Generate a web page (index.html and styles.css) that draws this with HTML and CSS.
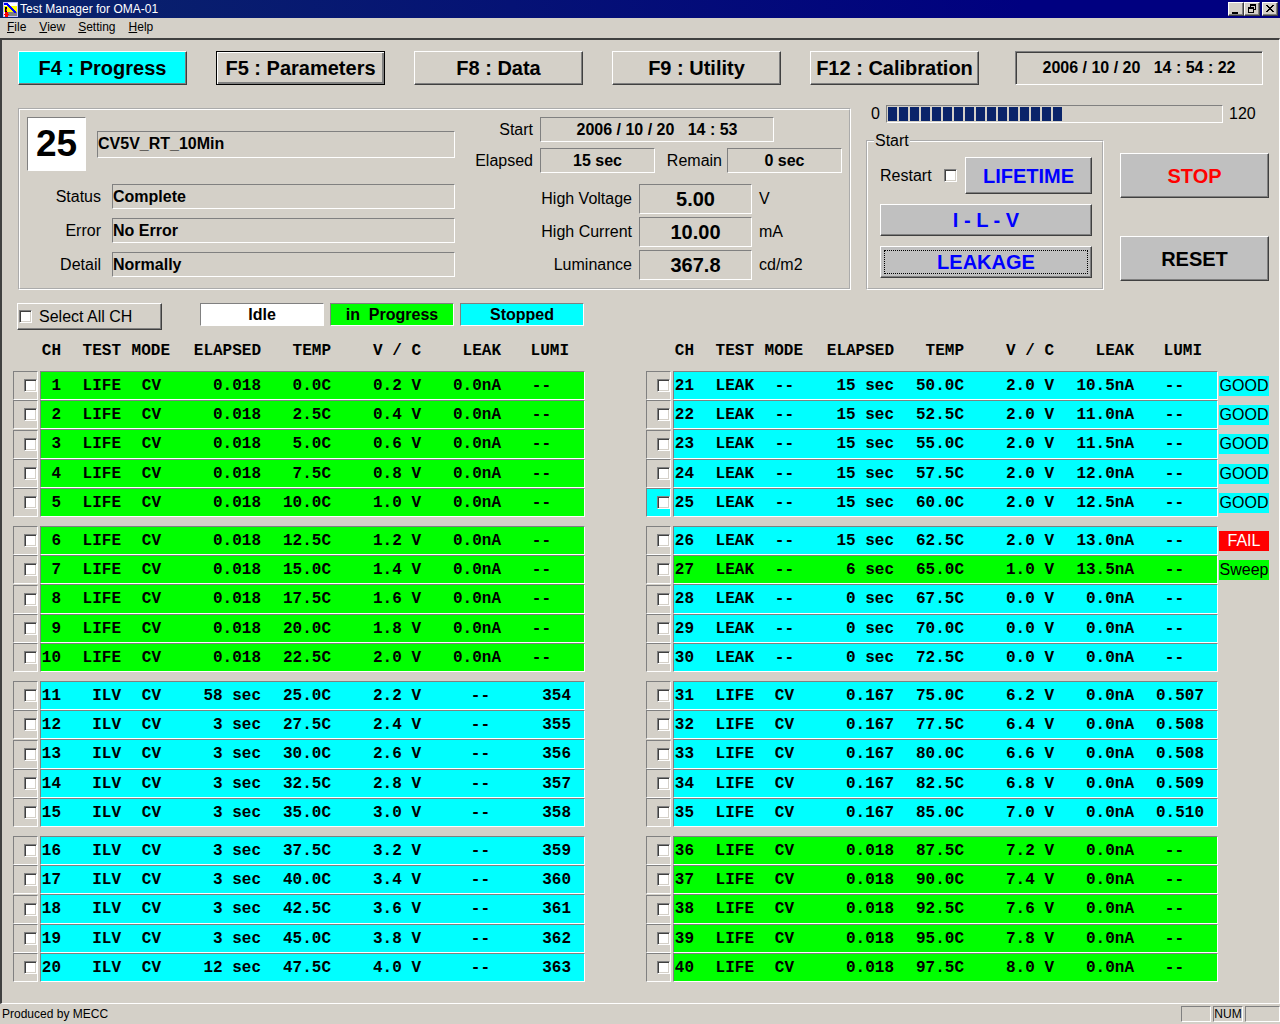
FILE: index.html
```html
<!DOCTYPE html>
<html lang="en">
<head>
<meta charset="utf-8">
<title>Test Manager for OMA-01</title>
<link rel="stylesheet" href="styles.css">
</head>
<body>
<header class="titlebar">
  <svg class="app-icon" width="16" height="16" viewBox="0 0 16 16" shape-rendering="crispEdges" aria-hidden="true">
    <path fill="#c0c0ff" d="M0 1h15v15H0z"/>
    <path fill="#fff" d="M1 2h13v3H1z"/>
    <path fill="#ff0" d="M1 5h13v6H1z"/>
    <path fill="#fff" d="M1 11h5v4H1z"/>
    <path fill="#808080" d="M5 11h9v4H5z"/>
    <path stroke="#00f" stroke-width="2" fill="none" d="M1 3h3l9 9"/>
    <path fill="#000" d="M2 6h2v5H2z"/>
    <path fill="#f00" d="M3 8h1v2H3zM2 11h3v5H2zM1 13h5v1H1z"/>
  </svg>
  <h1>Test Manager for OMA-01</h1>
  <div class="window-controls">
    <button type="button" aria-label="Minimize"><svg width="12" height="10" shape-rendering="crispEdges"><path d="M2 8h6v2H2z"/></svg></button>
    <button type="button" aria-label="Restore"><svg width="12" height="10" shape-rendering="crispEdges"><path fill-rule="evenodd" d="M4 0h6v6H8V5h1V2H5v1H4zM2 3h6v6H2zM3 5h4v3H3z"/></svg></button>
    <button type="button" aria-label="Close" class="close"><svg width="12" height="10" shape-rendering="crispEdges"><path d="M2 1h2v1h1v1h2V2h1V1h2v1H9v1H8v1H7v1h1v1h1v1h1v1H8V7H7V6H5v1H4v1H2V7h1V6h1V5h1V4H4V3H3V2H2z"/></svg></button>
  </div>
</header>
<nav class="menubar" aria-label="Menu">
  <a href="#file"><u>F</u>ile</a>
  <a href="#view"><u>V</u>iew</a>
  <a href="#setting"><u>S</u>etting</a>
  <a href="#help"><u>H</u>elp</a>
</nav>

<main>
  <div class="modes">
    <button type="button" class="mode current">F4 : Progress</button>
    <button type="button" class="mode default">F5 : Parameters</button>
    <button type="button" class="mode">F8 : Data</button>
    <button type="button" class="mode">F9 : Utility</button>
    <button type="button" class="mode">F12 : Calibration</button>
    <time class="clock">2006 / 10 / 20   14 : 54 : 22</time>
  </div>

  <div class="overview">
    <section class="channel" aria-label="Selected channel">
      <div class="identity">
        <div class="headline">
          <output class="number">25</output>
          <output class="field recipe">CV5V_RT_10Min</output>
        </div>
        <div class="states">
          <label for="status">Status</label><output id="status" class="field">Complete</output>
          <label for="error">Error</label><output id="error" class="field">No Error</output>
          <label for="detail">Detail</label><output id="detail" class="field">Normally</output>
        </div>
      </div>
      <div class="readings">
        <div class="line">
          <label for="start">Start</label><output id="start" class="field mid date">2006 / 10 / 20   14 : 53</output>
        </div>
        <div class="line">
          <label for="elapsed">Elapsed</label><output id="elapsed" class="field mid span">15 sec</output>
          <label for="remain" class="remain">Remain</label><output id="remain" class="field mid span">0 sec</output>
        </div>
        <div class="measures">
          <label for="volt">High Voltage</label><output id="volt" class="field mid big">5.00</output><span>V</span>
          <label for="curr">High Current</label><output id="curr" class="field mid big">10.00</output><span>mA</span>
          <label for="lumi">Luminance</label><output id="lumi" class="field mid big">367.8</output><span>cd/m2</span>
        </div>
      </div>
    </section>

    <section class="controls" aria-label="Controls">
      <div class="gauge">
        <span>0</span>
        <progress value="63" max="120" aria-label="Progress"></progress>
        <span>120</span>
      </div>
      <div class="actions">
        <fieldset>
          <legend>Start</legend>
          <div class="restart">
            <label for="restart">Restart</label>
            <input type="checkbox" id="restart">
            <button type="button" class="action">LIFETIME</button>
          </div>
          <button type="button" class="action">I - L - V</button>
          <button type="button" class="action focused">LEAKAGE</button>
        </fieldset>
        <div class="halt">
          <button type="button" class="action stop">STOP</button>
          <button type="button" class="action reset">RESET</button>
        </div>
      </div>
    </section>
  </div>

  <div class="legend-bar">
    <label class="select-all"><input type="checkbox">Select All CH</label>
    <span class="key idle">Idle</span>
    <span class="key running">in&nbsp; Progress</span>
    <span class="key stopped">Stopped</span>
  </div>

  <div class="tables">
    <table>
      <colgroup><col class="c-pick"><col class="c-ch"><col class="c-test"><col class="c-mode"><col class="c-elapsed"><col class="c-temp"><col class="c-vc"><col class="c-leak"><col class="c-lumi"></colgroup>
      <thead><tr><td><th>CH<th>TEST<th>MODE<th>ELAPSED<th>TEMP<th>V / C<th>LEAK<th>LUMI</tr></thead>
      <tbody class="run">
        <tr><td><label><input type="checkbox" aria-label="CH 1"></label><td>1<td>LIFE<td>CV<td>0.018<td>0.0C<td>0.2 V<td>0.0nA<td class="none">--</tr>
        <tr><td><label><input type="checkbox" aria-label="CH 2"></label><td>2<td>LIFE<td>CV<td>0.018<td>2.5C<td>0.4 V<td>0.0nA<td class="none">--</tr>
        <tr><td><label><input type="checkbox" aria-label="CH 3"></label><td>3<td>LIFE<td>CV<td>0.018<td>5.0C<td>0.6 V<td>0.0nA<td class="none">--</tr>
        <tr><td><label><input type="checkbox" aria-label="CH 4"></label><td>4<td>LIFE<td>CV<td>0.018<td>7.5C<td>0.8 V<td>0.0nA<td class="none">--</tr>
        <tr><td><label><input type="checkbox" aria-label="CH 5"></label><td>5<td>LIFE<td>CV<td>0.018<td>10.0C<td>1.0 V<td>0.0nA<td class="none">--</tr>
      </tbody>
      <tbody class="gap"><tr><td colspan="9"></td></tr></tbody>
      <tbody class="run">
        <tr><td><label><input type="checkbox" aria-label="CH 6"></label><td>6<td>LIFE<td>CV<td>0.018<td>12.5C<td>1.2 V<td>0.0nA<td class="none">--</tr>
        <tr><td><label><input type="checkbox" aria-label="CH 7"></label><td>7<td>LIFE<td>CV<td>0.018<td>15.0C<td>1.4 V<td>0.0nA<td class="none">--</tr>
        <tr><td><label><input type="checkbox" aria-label="CH 8"></label><td>8<td>LIFE<td>CV<td>0.018<td>17.5C<td>1.6 V<td>0.0nA<td class="none">--</tr>
        <tr><td><label><input type="checkbox" aria-label="CH 9"></label><td>9<td>LIFE<td>CV<td>0.018<td>20.0C<td>1.8 V<td>0.0nA<td class="none">--</tr>
        <tr><td><label><input type="checkbox" aria-label="CH 10"></label><td>10<td>LIFE<td>CV<td>0.018<td>22.5C<td>2.0 V<td>0.0nA<td class="none">--</tr>
      </tbody>
      <tbody class="gap"><tr><td colspan="9"></td></tr></tbody>
      <tbody class="stop">
        <tr><td><label><input type="checkbox" aria-label="CH 11"></label><td>11<td>ILV<td>CV<td>58 sec<td>25.0C<td>2.2 V<td class="none">--<td>354</tr>
        <tr><td><label><input type="checkbox" aria-label="CH 12"></label><td>12<td>ILV<td>CV<td>3 sec<td>27.5C<td>2.4 V<td class="none">--<td>355</tr>
        <tr><td><label><input type="checkbox" aria-label="CH 13"></label><td>13<td>ILV<td>CV<td>3 sec<td>30.0C<td>2.6 V<td class="none">--<td>356</tr>
        <tr><td><label><input type="checkbox" aria-label="CH 14"></label><td>14<td>ILV<td>CV<td>3 sec<td>32.5C<td>2.8 V<td class="none">--<td>357</tr>
        <tr><td><label><input type="checkbox" aria-label="CH 15"></label><td>15<td>ILV<td>CV<td>3 sec<td>35.0C<td>3.0 V<td class="none">--<td>358</tr>
      </tbody>
      <tbody class="gap"><tr><td colspan="9"></td></tr></tbody>
      <tbody class="stop">
        <tr><td><label><input type="checkbox" aria-label="CH 16"></label><td>16<td>ILV<td>CV<td>3 sec<td>37.5C<td>3.2 V<td class="none">--<td>359</tr>
        <tr><td><label><input type="checkbox" aria-label="CH 17"></label><td>17<td>ILV<td>CV<td>3 sec<td>40.0C<td>3.4 V<td class="none">--<td>360</tr>
        <tr><td><label><input type="checkbox" aria-label="CH 18"></label><td>18<td>ILV<td>CV<td>3 sec<td>42.5C<td>3.6 V<td class="none">--<td>361</tr>
        <tr><td><label><input type="checkbox" aria-label="CH 19"></label><td>19<td>ILV<td>CV<td>3 sec<td>45.0C<td>3.8 V<td class="none">--<td>362</tr>
        <tr><td><label><input type="checkbox" aria-label="CH 20"></label><td>20<td>ILV<td>CV<td>12 sec<td>47.5C<td>4.0 V<td class="none">--<td>363</tr>
      </tbody>
    </table>

    <table>
      <colgroup><col class="c-pick"><col class="c-ch"><col class="c-test"><col class="c-mode"><col class="c-elapsed"><col class="c-temp"><col class="c-vc"><col class="c-leak"><col class="c-lumi"><col class="c-result"></colgroup>
      <thead><tr><td><th>CH<th>TEST<th>MODE<th>ELAPSED<th>TEMP<th>V / C<th>LEAK<th>LUMI<td></tr></thead>
      <tbody class="stop">
        <tr><td><label><input type="checkbox" aria-label="CH 21"></label><td>21<td>LEAK<td>--<td>15 sec<td>50.0C<td>2.0 V<td>10.5nA<td class="none">--<td><b class="good">GOOD</b></tr>
        <tr><td><label><input type="checkbox" aria-label="CH 22"></label><td>22<td>LEAK<td>--<td>15 sec<td>52.5C<td>2.0 V<td>11.0nA<td class="none">--<td><b class="good">GOOD</b></tr>
        <tr><td><label><input type="checkbox" aria-label="CH 23"></label><td>23<td>LEAK<td>--<td>15 sec<td>55.0C<td>2.0 V<td>11.5nA<td class="none">--<td><b class="good">GOOD</b></tr>
        <tr><td><label><input type="checkbox" aria-label="CH 24"></label><td>24<td>LEAK<td>--<td>15 sec<td>57.5C<td>2.0 V<td>12.0nA<td class="none">--<td><b class="good">GOOD</b></tr>
        <tr class="active"><td><label><input type="checkbox" aria-label="CH 25"></label><td>25<td>LEAK<td>--<td>15 sec<td>60.0C<td>2.0 V<td>12.5nA<td class="none">--<td><b class="good">GOOD</b></tr>
      </tbody>
      <tbody class="gap"><tr><td colspan="10"></td></tr></tbody>
      <tbody class="stop">
        <tr><td><label><input type="checkbox" aria-label="CH 26"></label><td>26<td>LEAK<td>--<td>15 sec<td>62.5C<td>2.0 V<td>13.0nA<td class="none">--<td><b class="fail">FAIL</b></tr>
        <tr class="sweeping"><td><label><input type="checkbox" aria-label="CH 27"></label><td>27<td>LEAK<td>--<td>6 sec<td>65.0C<td>1.0 V<td>13.5nA<td class="none">--<td><b class="sweep">Sweep</b></tr>
        <tr><td><label><input type="checkbox" aria-label="CH 28"></label><td>28<td>LEAK<td>--<td>0 sec<td>67.5C<td>0.0 V<td>0.0nA<td class="none">--<td></tr>
        <tr><td><label><input type="checkbox" aria-label="CH 29"></label><td>29<td>LEAK<td>--<td>0 sec<td>70.0C<td>0.0 V<td>0.0nA<td class="none">--<td></tr>
        <tr><td><label><input type="checkbox" aria-label="CH 30"></label><td>30<td>LEAK<td>--<td>0 sec<td>72.5C<td>0.0 V<td>0.0nA<td class="none">--<td></tr>
      </tbody>
      <tbody class="gap"><tr><td colspan="10"></td></tr></tbody>
      <tbody class="stop">
        <tr><td><label><input type="checkbox" aria-label="CH 31"></label><td>31<td>LIFE<td>CV<td>0.167<td>75.0C<td>6.2 V<td>0.0nA<td>0.507<td></tr>
        <tr><td><label><input type="checkbox" aria-label="CH 32"></label><td>32<td>LIFE<td>CV<td>0.167<td>77.5C<td>6.4 V<td>0.0nA<td>0.508<td></tr>
        <tr><td><label><input type="checkbox" aria-label="CH 33"></label><td>33<td>LIFE<td>CV<td>0.167<td>80.0C<td>6.6 V<td>0.0nA<td>0.508<td></tr>
        <tr><td><label><input type="checkbox" aria-label="CH 34"></label><td>34<td>LIFE<td>CV<td>0.167<td>82.5C<td>6.8 V<td>0.0nA<td>0.509<td></tr>
        <tr><td><label><input type="checkbox" aria-label="CH 35"></label><td>35<td>LIFE<td>CV<td>0.167<td>85.0C<td>7.0 V<td>0.0nA<td>0.510<td></tr>
      </tbody>
      <tbody class="gap"><tr><td colspan="10"></td></tr></tbody>
      <tbody class="run">
        <tr><td><label><input type="checkbox" aria-label="CH 36"></label><td>36<td>LIFE<td>CV<td>0.018<td>87.5C<td>7.2 V<td>0.0nA<td class="none">--<td></tr>
        <tr><td><label><input type="checkbox" aria-label="CH 37"></label><td>37<td>LIFE<td>CV<td>0.018<td>90.0C<td>7.4 V<td>0.0nA<td class="none">--<td></tr>
        <tr><td><label><input type="checkbox" aria-label="CH 38"></label><td>38<td>LIFE<td>CV<td>0.018<td>92.5C<td>7.6 V<td>0.0nA<td class="none">--<td></tr>
        <tr><td><label><input type="checkbox" aria-label="CH 39"></label><td>39<td>LIFE<td>CV<td>0.018<td>95.0C<td>7.8 V<td>0.0nA<td class="none">--<td></tr>
        <tr><td><label><input type="checkbox" aria-label="CH 40"></label><td>40<td>LIFE<td>CV<td>0.018<td>97.5C<td>8.0 V<td>0.0nA<td class="none">--<td></tr>
      </tbody>
    </table>
  </div>
</main>

<footer class="statusbar">
  <span class="message">Produced by MECC</span>
  <span class="pane"></span>
  <span class="pane">NUM</span>
  <span class="pane wide"></span>
</footer>
</body>
</html>
```
FILE: styles.css
```css
:root {
  --face: #d4d0c8;
  --shade: #808080;
  --dark: #404040;
  --run: #00ff00;
  --stop: #00ffff;
}

* { box-sizing: border-box; }

body {
  margin: 0;
  min-height: 100vh;
  display: flex;
  flex-direction: column;
  background: var(--face);
  color: #000;
  font: 16px/20px "Liberation Sans", Arial, sans-serif;
}

button {
  margin: 0;
  padding: 0;
  font: bold 20px/24px "Liberation Sans", Arial, sans-serif;
  color: #000;
  background: var(--face);
  border: 1px solid;
  border-color: #fff var(--dark) var(--dark) #fff;
  box-shadow: inset -1px -1px var(--shade);
}

input[type="checkbox"] {
  appearance: none;
  flex: none;
  width: 13px;
  height: 13px;
  margin: 0;
  background: #fff;
  border: 1px solid;
  border-color: var(--shade) #fff #fff var(--shade);
  box-shadow: inset 1px 1px var(--dark), inset -1px -1px var(--face);
}

/* Title and menu */
.titlebar {
  display: flex;
  align-items: center;
  height: 18px;
  padding: 0 2px 0 3px;
  background: linear-gradient(to right, #0a246a, #000080 80%);
  color: #fff;
}
.titlebar h1 {
  flex: 1;
  margin: 0 0 0 1px;
  font: 12px/16px "Liberation Sans", Arial, sans-serif;
}
.window-controls { display: flex; }
.window-controls button {
  display: flex;
  justify-content: center;
  width: 16px;
  height: 14px;
  padding: 1px 0 0;
}
.window-controls .close { margin-left: 2px; }

.menubar {
  display: flex;
  gap: 13px;
  height: 20px;
  padding: 0 7px;
  font-size: 12px;
  line-height: 18px;
}
.menubar a { color: #000; text-decoration: none; }

main {
  flex: 1;
  padding: 11px 10px 0 11px;
  border: solid;
  border-width: 2px 1px 1px 2px;
  border-color: var(--dark) #fff #fff var(--dark);
}

/* Mode buttons */
.modes { display: flex; gap: 29px; padding: 0 6px 0 5px; }
.mode { flex: 1; height: 34px; white-space: nowrap; }
.mode.current { background: var(--stop); }
.mode.default {
  border-color: #000;
  box-shadow: inset 1px 1px #fff, inset -2px -2px var(--shade);
}
.clock {
  width: 248px;
  height: 34px;
  margin-left: 7px;
  border: 1px solid;
  border-color: var(--shade) #fff #fff var(--shade);
  box-shadow: inset 1px 1px var(--dark);
  font-weight: bold;
  line-height: 32px;
  text-align: center;
  white-space: pre;
}

/* Selected channel */
.overview { display: flex; gap: 15px; margin-top: 19px; padding-left: 5px; }
.channel {
  flex: 1;
  display: flex;
  justify-content: space-between;
  gap: 20px;
  margin-top: 4px;
  padding: 7px;
  border: 2px groove #fff;
}
.field {
  display: block;
  height: 25px;
  border: 1px solid;
  border-color: var(--shade) #fff #fff var(--shade);
  font-weight: bold;
  line-height: 23px;
  white-space: pre;
}
.mid { text-align: center; }
.identity { flex: 1; }
.headline { display: flex; align-items: center; gap: 11px; }
.number {
  width: 59px;
  height: 54px;
  background: #fff;
  border: 1px solid;
  border-color: var(--shade) #fff #fff var(--shade);
  font-size: 37px;
  font-weight: bold;
  line-height: 52px;
  text-align: center;
}
.recipe { flex: 1; height: 27px; line-height: 23px; }
.states {
  display: grid;
  grid-template-columns: 74px 1fr;
  gap: 9px 11px;
  align-items: center;
  margin-top: 13px;
  text-align: right;
}
.states .field { text-align: left; }

.readings { display: flex; flex-direction: column; gap: 6px; }
.line { display: flex; align-items: center; }
.line label { width: 58px; margin-right: 7px; text-align: right; }
.line .remain { width: 67px; margin-right: 5px; }
.date { width: 234px; }
.span { width: 115px; }
.measures {
  display: grid;
  grid-template-columns: 157px 113px 1fr;
  gap: 3px 7px;
  align-items: center;
  margin-top: 5px;
}
.measures label { text-align: right; }
.big { height: 30px; font-size: 20px; line-height: 28px; }

/* Controls */
.controls { width: 403px; }
.gauge { display: flex; align-items: center; gap: 6px; height: 20px; padding-left: 5px; }
progress {
  appearance: none;
  flex: 1;
  height: 18px;
  padding: 1px;
  background: none;
  border: 1px solid;
  border-color: var(--shade) #fff #fff var(--shade);
}
.gauge span:last-child { width: 40px; }
progress::-webkit-progress-bar { background: none; }
progress::-webkit-progress-value {
  background: repeating-linear-gradient(to right, #0a246a 0 9px, var(--face) 9px 11px);
}
.actions { display: flex; gap: 16px; margin-top: 7px; }
fieldset {
  flex: 1;
  display: flex;
  flex-direction: column;
  gap: 10px;
  min-width: 0;
  height: 159px;
  margin: 0;
  padding: 6px 10px 9px 12px;
  border: 2px groove #fff;
}
legend { margin-left: -6px; padding: 0 1px; }
.restart { display: flex; align-items: center; gap: 8px; }
.restart label { width: 56px; }
.restart .action { flex: 1; height: 37px; }
.action { height: 32px; background: #c0c0c0; color: #00f; }
.focused { outline: 1px dotted #000; outline-offset: -5px; }
.halt { display: flex; flex-direction: column; gap: 38px; width: 149px; padding-top: 22px; }
.halt .action { height: 45px; }
.halt .stop { color: #f00; }
.halt .reset { color: #000; }

/* Legend */
.legend-bar { display: flex; gap: 6px; margin-top: 13px; padding-left: 4px; }
.select-all {
  display: flex;
  align-items: center;
  gap: 7px;
  width: 145px;
  height: 27px;
  margin-right: 32px;
  padding-left: 1px;
  border: 1px solid;
  border-color: #fff var(--dark) var(--dark) #fff;
  box-shadow: inset -1px -1px var(--shade);
}
.key {
  width: 124px;
  height: 23px;
  border: 1px solid;
  border-color: var(--shade) #fff #fff var(--shade);
  font-weight: bold;
  line-height: 21px;
  text-align: center;
}
.idle { background: #fff; }
.running { background: var(--run); }
.stopped { background: var(--stop); }

/* Channel tables */
.tables { display: flex; justify-content: space-between; align-items: flex-start; }
table {
  table-layout: fixed;
  width: 572px;
  border-collapse: separate;
  border-spacing: 0;
  font: bold 16px/20px "Liberation Mono", "Courier New", monospace;
}
table + table { width: 623px; }
.c-pick { width: 27px; }
.c-ch { width: 21px; }
.c-test { width: 60px; }
.c-mode { width: 50px; }
.c-elapsed { width: 90px; }
.c-temp { width: 70px; }
.c-vc { width: 90px; }
.c-leak { width: 80px; }
.c-lumi { width: 84px; }
.c-result { width: 51px; }
th, td { padding: 0; text-align: right; white-space: pre; }
th { height: 41px; }
th:nth-child(4) { padding-right: 1px; }
th:nth-child(9) { padding-right: 16px; }

.run td, .stop td {
  height: 29px;
  border: solid;
  border-width: 1px 0;
  border-color: var(--shade) #fff #fff var(--shade);
  background: var(--run);
}
.stop td { background: var(--stop); }
.stop .sweeping td { background: var(--run); }
.run tr:nth-child(3) td, .stop tr:nth-child(3) td { height: 30px; }
.run td:nth-child(2), .stop td:nth-child(2) { border-left-width: 1px; }
tbody td:nth-child(4) { padding-right: 10px; }
.run td:nth-child(9), .stop td:nth-child(9) { border-right-width: 1px; padding-right: 13px; }
tbody td.none { padding-right: 11px; }
tbody tr td.none:nth-child(9) { padding-right: 33px; }
tbody tr[class] td:first-child, tbody tr[class] td:nth-child(10),
tbody tr td:first-child, tbody tr td:nth-child(10) { border: 0; background: none; }
.gap td { height: 9px; }

td label {
  display: flex;
  align-items: center;
  justify-content: flex-end;
  width: 25px;
  height: 29px;
  border: 1px solid;
  border-color: var(--shade) #fff #fff var(--shade);
}
.active label { background: var(--stop); }
td b {
  display: block;
  width: 50px;
  height: 20px;
  margin-left: auto;
  font: 16px/20px "Liberation Sans", Arial, sans-serif;
  text-align: center;
}
.good { background: var(--stop); }
.fail { background: #f00; color: #fff; }
.sweep { background: var(--run); }

/* Status bar */
.statusbar {
  display: flex;
  gap: 2px;
  height: 20px;
  padding: 2px 0 2px 2px;
  font-size: 12px;
  line-height: 16px;
}
.message { flex: 1; }
.pane {
  width: 30px;
  border: 1px solid;
  border-color: var(--shade) #fff #fff var(--shade);
  line-height: 14px;
  text-align: center;
}
.wide { width: 35px; }
```
